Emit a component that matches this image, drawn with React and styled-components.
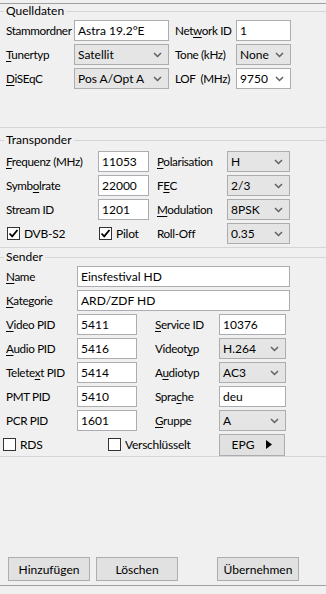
import React from 'react';
import styled, { createGlobalStyle } from 'styled-components';

const GlobalStyle = createGlobalStyle`
  html, body {
    margin: 0;
    padding: 0;
    background: #f0f0f0;
  }
  body {
    font-family: "Lato", "Noto Sans", sans-serif;
    font-size: 12px;
    color: #000;
  }
`;

const Panel = styled.div`
  box-sizing: border-box;
  margin-top: 3px;
  height: 583px;
  border-top: 1px solid #a0a0a0;
  border-bottom: 1px solid #a0a0a0;
  display: flex;
  flex-direction: column;
`;

const Group = styled.fieldset`
  margin: ${p => p.$top || 0}px 0 0 0;
  padding: ${p => p.$padTop || 0}px 0 ${p => p.$padBottom || 0}px 6px;
  border: none;
  border-top: 1px solid #d5d5d5;
  border-bottom: 1px solid #d5d5d5;
  min-width: 0;
`;

const Legend = styled.legend`
  padding: 0 2px;
  margin-left: -2px;
  line-height: 14px;
  height: 14px;
`;

const Grid = styled.div`
  display: grid;
  grid-template-columns: ${p => p.$cols};
  grid-auto-rows: 21px;
  row-gap: 3px;
  align-items: center;
`;

const Label = styled.span`
  white-space: nowrap;
  padding-left: ${p => p.$indent || 0}px;
  line-height: 21px;
  font-size: 11.7px;
  letter-spacing: -0.35px;
  u {
    text-decoration-thickness: 1px;
    text-underline-offset: 2px;
  }
`;

const TextBox = styled.div`
  box-sizing: border-box;
  height: 21px;
  background: #fff;
  border: 1px solid #abadb3;
  padding: 0 3px;
  line-height: 19px;
  white-space: nowrap;
  overflow: hidden;
  margin-right: ${p => p.$extend ? -4 : 0}px;
  grid-column: ${p => p.$span || 'auto'};
`;

const ComboBox = styled.div`
  box-sizing: border-box;
  height: 21px;
  background: ${p => p.$editable ? '#fff' : '#e5e5e5'};
  border: 1px solid #adadad;
  padding: 0 3px;
  line-height: 19px;
  display: flex;
  justify-content: space-between;
  align-items: center;
  white-space: nowrap;
`;

const Chevron = () => (
  <svg width="9" height="6" viewBox="0 0 9 6" style={{ marginRight: 3, flex: 'none' }}>
    <path d="M1 1 L4.5 4.5 L8 1" fill="none" stroke="#606060" strokeWidth="1.5" />
  </svg>
);

const Combo = ({ value, editable }) => (
  <ComboBox $editable={editable}>
    <span>{value}</span>
    <Chevron />
  </ComboBox>
);

const CheckWrap = styled.label`
  display: flex;
  align-items: center;
  gap: 4px;
  margin-left: ${p => p.$shift || 0}px;
  white-space: nowrap;
  letter-spacing: -0.25px;
  min-width: max-content;
`;

const Box = styled.span`
  flex: none;
  box-sizing: border-box;
  width: 13px;
  height: 13px;
  border: 1px solid #333;
  background: #fff;
  display: flex;
  align-items: center;
  justify-content: center;
`;

const Check = ({ checked, children, shift }) => (
  <CheckWrap $shift={shift}>
    <Box>
      {checked && (
        <svg width="11" height="11" viewBox="0 0 11 11">
          <path d="M1.5 5.5 L4.2 8.3 L9.5 2" fill="none" stroke="#000" strokeWidth="1.8" />
        </svg>
      )}
    </Box>
    {children}
  </CheckWrap>
);

const Button = styled.div`
  box-sizing: border-box;
  width: ${p => p.$w || 82}px;
  height: ${p => p.$h || 24}px;
  background: #e1e1e1;
  border: 1px solid #adadad;
  display: flex;
  align-items: center;
  justify-content: center;
  gap: ${p => p.$gap || 0}px;
`;

const Footer = styled.div`
  margin-top: auto;
  margin-bottom: 4px;
  display: flex;
  padding-left: 8px;
  gap: 6px;
`;

const Spacer = styled.div`
  width: 27px;
`;

export default function App() {
  return (
    <>
      <GlobalStyle />
      <Panel>
        <Group $padTop={2} $padBottom={38}>
          <Legend>Quelldaten</Legend>
          <Grid $cols="68px 95px 67px 55px">
            <Label>Stammordner</Label>
            <TextBox>Astra 19.2°E</TextBox>
            <Label $indent={6}>Net<u>w</u>ork ID</Label>
            <TextBox>1</TextBox>

            <Label><u>T</u>unertyp</Label>
            <Combo value="Satellit" />
            <Label $indent={6}>Tone (kHz)</Label>
            <Combo value="None" />

            <Label><u>D</u>iSEqC</Label>
            <Combo value="Pos A/Opt A" />
            <Label $indent={6}>LOF&nbsp;&nbsp;(MHz)</Label>
            <Combo value="9750" editable />
          </Grid>
        </Group>

        <Group $top={5} $padTop={4} $padBottom={3}>
          <Legend>Transponder</Legend>
          <Grid $cols="92px 51px 78px 63px">
            <Label><u>F</u>requenz (MHz)</Label>
            <TextBox>11053</TextBox>
            <Label $indent={8}><u>P</u>olarisation</Label>
            <Combo value="H" />

            <Label>Symb<u>o</u>lrate</Label>
            <TextBox>22000</TextBox>
            <Label $indent={8}>F<u>E</u>C</Label>
            <Combo value="2/3" />

            <Label>Stream ID</Label>
            <TextBox>1201</TextBox>
            <Label $indent={8}><u>M</u>odulation</Label>
            <Combo value="8PSK" />

            <Check checked shift={1}>DVB-S2</Check>
            <Check checked shift={1}>Pilot</Check>
            <Label $indent={8}>Roll-Off</Label>
            <Combo value="0.35" />
          </Grid>
        </Group>

        <Group $top={2} $padTop={2} $padBottom={1}>
          <Legend>Sender</Legend>
          <Grid $cols="71px 60px 82px 67px">
            <Label><u>N</u>ame</Label>
            <TextBox $span="2 / -1" $extend>Einsfestival HD</TextBox>

            <Label><u>K</u>ategorie</Label>
            <TextBox $span="2 / -1" $extend>ARD/ZDF HD</TextBox>

            <Label><u>V</u>ideo PID</Label>
            <TextBox>5411</TextBox>
            <Label $indent={18}><u>S</u>ervice ID</Label>
            <TextBox>10376</TextBox>

            <Label><u>A</u>udio PID</Label>
            <TextBox>5416</TextBox>
            <Label $indent={18}>Videot<u>y</u>p</Label>
            <Combo value="H.264" />

            <Label>Telete<u>x</u>t PID</Label>
            <TextBox>5414</TextBox>
            <Label $indent={18}>A<u>u</u>diotyp</Label>
            <Combo value="AC3" />

            <Label>PMT PID</Label>
            <TextBox>5410</TextBox>
            <Label $indent={18}>Spra<u>c</u>he</Label>
            <TextBox>deu</TextBox>

            <Label>PCR PID</Label>
            <TextBox>1601</TextBox>
            <Label $indent={18}><u>G</u>ruppe</Label>
            <Combo value="A" />

            <Check shift={-3}>RDS</Check>
            <Check shift={31}>Verschlüsselt</Check>
            <span />
            <Button $w={66} $h={22} $gap={12}>
              EPG
              <svg width="6" height="9" viewBox="0 0 6 9">
                <path d="M0 0 L6 4.5 L0 9 Z" fill="#000" />
              </svg>
            </Button>
          </Grid>
        </Group>

        <Footer>
          <Button>Hinzufügen</Button>
          <Button>Löschen</Button>
          <Spacer />
          <Button>Übernehmen</Button>
        </Footer>
      </Panel>
    </>
  );
}
